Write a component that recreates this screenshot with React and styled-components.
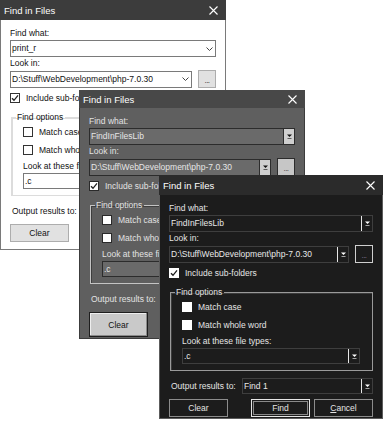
import React from "react";
import styled, { createGlobalStyle, ThemeProvider } from "styled-components";

const Global = createGlobalStyle`
  html, body { margin: 0; padding: 0; background: #ffffff; }
  * { box-sizing: border-box; }
`;

const light = {
  frame: "#7a7a7a", titleBg: "#3c3c3c", titleFg: "#ffffff", titleH: 19,
  body: "#ffffff", text: "#111111",
  fieldBg: "#ffffff", fieldBorder: "#7a7a7a", fieldText: "#111111",
  arrow: "chevron", arrowBg: "transparent", arrowFg: "#444444", arrowSep: "transparent",
  browseBg: "#e1e1e1", browseBorder: "#adadad", browseText: "#222222",
  btnBg: "#e1e1e1", btnBorder: "#adadad", btnText: "#111111", btnH: 18,
  defBorder: "#adadad", btnShadow: "none",
  checkBg: "#ffffff", checkBorder: "#333333", checkMark: "#222222",
  group: "#dcdcdc", groupShadow: "#dcdcdc", padBottom: 7,
};

const gray = {
  frame: "#3c3c3c", titleBg: "#484848", titleFg: "#ffffff", titleH: 17,
  body: "#5f5f5f", text: "#e2e2e2",
  fieldBg: "#6a6a6a", fieldBorder: "#2c2c2c", fieldText: "#e6e6e6",
  arrow: "triangle", arrowBg: "#cfcfcf", arrowFg: "#111111", arrowSep: "#2c2c2c",
  browseBg: "#c6c6c6", browseBorder: "#2c2c2c", browseText: "#333333",
  btnBg: "#c9c9c9", btnBorder: "#1e1e1e", btnText: "#111111", btnH: 25,
  defBorder: "#1e1e1e", btnShadow: "inset -1px -1px 0 #8a8a8a, inset 1px 1px 0 #eeeeee",
  checkBg: "#ffffff", checkBorder: "#2a2a2a", checkMark: "#222222",
  group: "#c4c4c4", groupShadow: "#3e3e3e", padBottom: 1,
};

const dark = {
  frame: "#5c5c5c", titleBg: "#2b2b2b", titleFg: "#ffffff", titleH: 19,
  body: "#1c1c1c", text: "#e4e4e4",
  fieldBg: "#1c1c1c", fieldBorder: "#3e3e3e", fieldText: "#e8e8e8",
  arrow: "triangle", arrowBg: "#1c1c1c", arrowFg: "#ffffff", arrowSep: "#e6e6e6",
  browseBg: "#1c1c1c", browseBorder: "#cfcfcf", browseText: "#8a7a9a",
  btnBg: "#1c1c1c", btnBorder: "#8c8c8c", btnText: "#e4e4e4", btnH: 18,
  defBorder: "#e6e6e6", btnShadow: "none",
  checkBg: "#ffffff", checkBorder: "#ffffff", checkMark: "#1c1c1c",
  group: "#9a9a9a", groupShadow: "#3a3a3a", padBottom: 1,
};

const Desktop = styled.div`
  position: relative;
  width: 385px;
  height: 425px;
  overflow: hidden;
  background: #ffffff;
`;

const Window = styled.div`
  position: absolute;
  left: ${(p) => p.$x}px;
  top: ${(p) => p.$y}px;
  width: ${(p) => p.$w}px;
  border: 1px solid ${(p) => p.theme.frame};
  border-top: none;
  background: ${(p) => p.theme.body};
  font-family: "Liberation Sans", Arial, sans-serif;
  font-size: 8.5px;
  color: ${(p) => p.theme.text};
`;

const TitleBar = styled.div`
  height: ${(p) => p.theme.titleH + 1}px;
  margin: 0 -1px;
  padding: 0 8px 0 4px;
  display: flex;
  align-items: center;
  justify-content: space-between;
  background: ${(p) => p.theme.titleBg};
  color: ${(p) => p.theme.titleFg};
  font-size: 9.5px;
`;

const Body = styled.div`
  display: flex;
  flex-direction: column;
  padding: 8px 9px ${(p) => p.theme.padBottom}px 9px;
`;

const Label = styled.div`
  height: 10px;
  line-height: 10px;
  white-space: nowrap;
  margin-top: ${(p) => p.$mt || 0}px;
  padding-left: ${(p) => p.$pl || 0}px;
`;

const Combo = styled.div`
  display: flex;
  align-items: stretch;
  height: ${(p) => p.$h || 17}px;
  flex: ${(p) => (p.$grow ? 1 : "none")};
  min-width: 0;
  margin-top: ${(p) => p.$mt || 0}px;
  border: 1px solid ${(p) => p.theme.fieldBorder};
  background: ${(p) => p.theme.fieldBg};
  color: ${(p) => p.theme.fieldText};
`;

const Value = styled.div`
  flex: 1;
  min-width: 0;
  padding-left: 1px;
  line-height: ${(p) => (p.$h || 17) - 2}px;
  white-space: nowrap;
  overflow: hidden;
`;

const ArrowBox = styled.div`
  width: 11px;
  display: flex;
  align-items: center;
  justify-content: center;
  background: ${(p) => p.theme.arrowBg};
  border-left: ${(p) => (p.theme.arrow === "chevron" ? "none" : `1px solid ${p.theme.arrowSep}`)};
`;

const Row = styled.div`
  display: flex;
  align-items: center;
  gap: ${(p) => p.$gap || 0}px;
  margin-top: ${(p) => p.$mt || 0}px;
`;

const Browse = styled.div`
  width: 18px;
  height: 18px;
  display: flex;
  align-items: flex-end;
  justify-content: center;
  padding-bottom: 2px;
  font-size: 8px;
  line-height: 8px;
  letter-spacing: -0.5px;
  background: ${(p) => p.theme.browseBg};
  border: 1px solid ${(p) => p.theme.browseBorder};
  color: ${(p) => p.theme.browseText};
`;

const CheckRow = styled.div`
  display: flex;
  align-items: center;
  gap: ${(p) => p.$gap || 6}px;
  height: 12px;
  margin-top: ${(p) => p.$mt || 0}px;
  white-space: nowrap;
`;

const Box = styled.div`
  width: 10px;
  height: 10px;
  flex: none;
  display: flex;
  align-items: center;
  justify-content: center;
  background: ${(p) => p.theme.checkBg};
  border: 1px solid ${(p) => p.theme.checkBorder};
`;

const Group = styled.fieldset`
  margin: 8px 0 0 1px;
  padding: 0;
  min-width: 0;
  border: 1px solid ${(p) => p.theme.group};
  box-shadow: inset 1px 1px 0 ${(p) => p.theme.groupShadow};
`;

const Legend = styled.legend`
  margin-left: 4px;
  padding: 0 2px 0 1px;
  height: 10px;
  line-height: 10px;
  font-size: 8.5px;
`;

const GroupInner = styled.div`
  display: flex;
  flex-direction: column;
  padding: 4px 12px 6px 11px;
`;

const OutLabel = styled.div`
  width: 73px;
  flex: none;
  padding-left: 2px;
  white-space: nowrap;
`;

const Buttons = styled.div`
  display: flex;
  align-items: center;
  gap: 4px;
  margin-top: 5px;
`;

const Spacer = styled.div`
  flex: 1;
`;

const Button = styled.div`
  width: 59px;
  height: ${(p) => p.theme.btnH}px;
  display: flex;
  align-items: center;
  justify-content: center;
  background: ${(p) => p.theme.btnBg};
  color: ${(p) => p.theme.btnText};
  border: 1px solid ${(p) => (p.$default ? p.theme.defBorder : p.theme.btnBorder)};
  box-shadow: ${(p) =>
    p.$default && p.theme.arrow === "triangle" && p.theme.body === "#1c1c1c"
      ? "inset 0 0 0 1px #1c1c1c, inset 0 0 0 2px #8a8a8a"
      : p.theme.btnShadow};
`;

const Close = () => (
  <svg width="9" height="9" viewBox="0 0 9 9">
    <path d="M0.5 0.5 L8.5 8.5 M8.5 0.5 L0.5 8.5" stroke="#ffffff" strokeWidth="1.1" fill="none" />
  </svg>
);

const Check = ({ color }) => (
  <svg width="8" height="8" viewBox="0 0 8 8">
    <path d="M1 4.2 L3 6.3 L7 1.4" stroke={color} strokeWidth="1.3" fill="none" />
  </svg>
);

const Arrow = ({ theme }) =>
  theme.arrow === "chevron" ? (
    <svg width="7" height="4" viewBox="0 0 7 4">
      <path d="M0.5 0.5 L3.5 3.5 L6.5 0.5" stroke={theme.arrowFg} strokeWidth="1" fill="none" />
    </svg>
  ) : (
    <svg width="5" height="5" viewBox="0 0 5 5">
      <path d="M0 0.5 H5 L2.5 3 Z" fill={theme.arrowFg} />
      <rect x="0.5" y="4" width="4" height="1" fill={theme.arrowFg} opacity="0.6" />
    </svg>
  );

const ComboBox = ({ theme, value, h, mt, grow }) => (
  <Combo $h={h} $mt={mt} $grow={grow}>
    <Value $h={h}>{value}</Value>
    <ArrowBox>
      <Arrow theme={theme} />
    </ArrowBox>
  </Combo>
);

const CheckBox = ({ theme, checked, label, mt, gap }) => (
  <CheckRow $mt={mt} $gap={gap}>
    <Box>{checked && <Check color={theme.checkMark} />}</Box>
    <span>{label}</span>
  </CheckRow>
);

const Dialog = ({ theme, x, y, w, what }) => (
  <ThemeProvider theme={theme}>
    <Window $x={x} $y={y} $w={w}>
      <TitleBar>
        <span>Find in Files</span>
        <Close />
      </TitleBar>
      <Body>
        <Label>Find what:</Label>
        <ComboBox theme={theme} value={what} mt={2} />
        <Label $mt={1}>Look in:</Label>
        <Row $gap={6} $mt={2}>
          <ComboBox theme={theme} value="D:\Stuff\WebDevelopment\php-7.0.30" grow />
          <Browse>...</Browse>
        </Row>
        <CheckBox theme={theme} checked label="Include sub-folders" mt={4} />
        <Group>
          <Legend>Find options</Legend>
          <GroupInner>
            <CheckBox theme={theme} label="Match case" />
            <CheckBox theme={theme} label="Match whole word" mt={6} />
            <Label $mt={5}>Look at these file types:</Label>
            <ComboBox theme={theme} value=".c" h={16} mt={2} />
          </GroupInner>
        </Group>
        <Row $mt={7}>
          <OutLabel>Output results to:</OutLabel>
          <ComboBox theme={theme} value="Find 1" h={16} grow />
        </Row>
        <Buttons>
          <Button>Clear</Button>
          <Spacer />
          <Button $default>Find</Button>
          <Button>
            <span>
              <u>C</u>ancel
            </span>
          </Button>
        </Buttons>
      </Body>
    </Window>
  </ThemeProvider>
);

export default function App() {
  return (
    <>
      <Global />
      <Desktop>
        <Dialog theme={light} x={0} y={0} w={226} what="print_r" />
        <Dialog theme={gray} x={79} y={90} w={226} what="FindInFilesLib" />
        <Dialog theme={dark} x={159} y={175} w={224} what="FindInFilesLib" />
      </Desktop>
    </>
  );
}
